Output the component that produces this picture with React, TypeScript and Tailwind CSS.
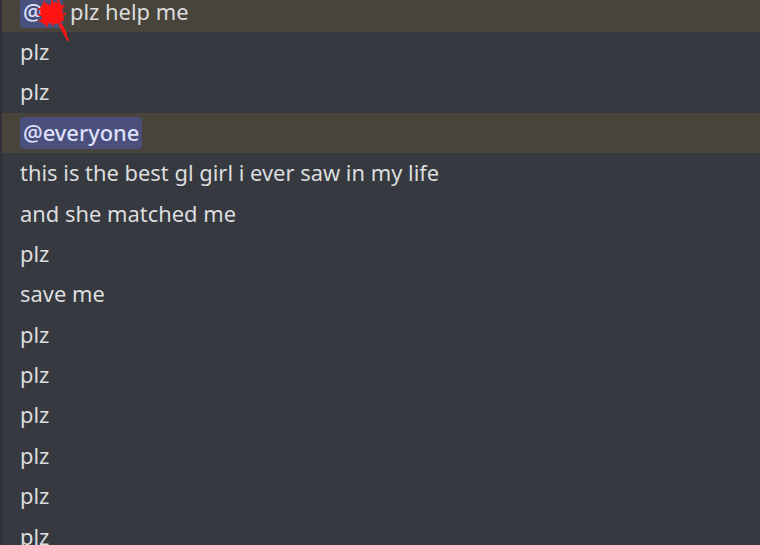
import React from "react";

const rows: { text: string; kind?: "first" | "everyone" }[] = [
  { text: "plz help me", kind: "first" },
  { text: "plz" },
  { text: "plz" },
  { text: "@everyone", kind: "everyone" },
  { text: "this is the best gl girl i ever saw in my life" },
  { text: "and she matched me" },
  { text: "plz" },
  { text: "save me" },
  { text: "plz" },
  { text: "plz" },
  { text: "plz" },
  { text: "plz" },
  { text: "plz" },
  { text: "plz" },
];

function Scribble() {
  return (
    <svg
      className="absolute left-0 top-0 pointer-events-none z-20"
      width="80"
      height="45"
      viewBox="0 0 80 45"
    >
      <path
        d="M41 6 L45 3 L50 5 L55 2 L60 4 L63 8 L62 13 L64 18 L61 22 L56 24 L50 23 L45 25 L41 22 L42 17 L40 12 Z"
        fill="#ff1414"
      />
      <g stroke="#ff1414" strokeWidth="2" fill="none" strokeLinecap="round" strokeLinejoin="round">
        <path d="M39 9 L64 6 M39 15 L65 14 M40 21 L63 20" />
        <path d="M58 0 L60 6 L59 11" />
        <path d="M44 2 L47 26 M52 1 L53 25" />
        <path d="M57 20 L62 29 L68 40" />
        <path d="M61 24 L66 34" />
      </g>
    </svg>
  );
}

export default function App() {
  return (
    <div
      className="w-[760px] h-[545px] overflow-hidden bg-[#36393f] relative"
      style={{ fontFamily: '"Noto Sans", "Open Sans", sans-serif' }}
    >
      <div className="absolute left-0 top-0 bottom-0 w-[2px] bg-[#2f3136] z-10" />
      <div className="flex flex-col mt-[-8.2px]">
        {rows.map((r, i) => {
          const hl = r.kind === "first" || r.kind === "everyone";
          return (
            <div
              key={i}
              className={
                "h-[40.4px] shrink-0 flex items-center pl-[20px] text-[21.9px] text-[#dcddde] relative whitespace-nowrap " +
                (hl ? "bg-[#48443c]" : "")
              }
            >
              {r.kind === "first" ? (
                <>
                  <span className="bg-[#4b4f7c] text-[#dee0fc] rounded-[4px] pl-[3px] font-medium leading-[32px] w-[43px] inline-block">
                    @
                  </span>
                  <span className="ml-[7px]">plz help me</span>
                </>
              ) : r.kind === "everyone" ? (
                <span className="bg-[#4b4f7c] text-[#dee0fc] rounded-[4px] px-[3px] font-medium leading-[32px]">
                  @everyone
                </span>
              ) : (
                <span>{r.text}</span>
              )}
            </div>
          );
        })}
      </div>
      <Scribble />
    </div>
  );
}
